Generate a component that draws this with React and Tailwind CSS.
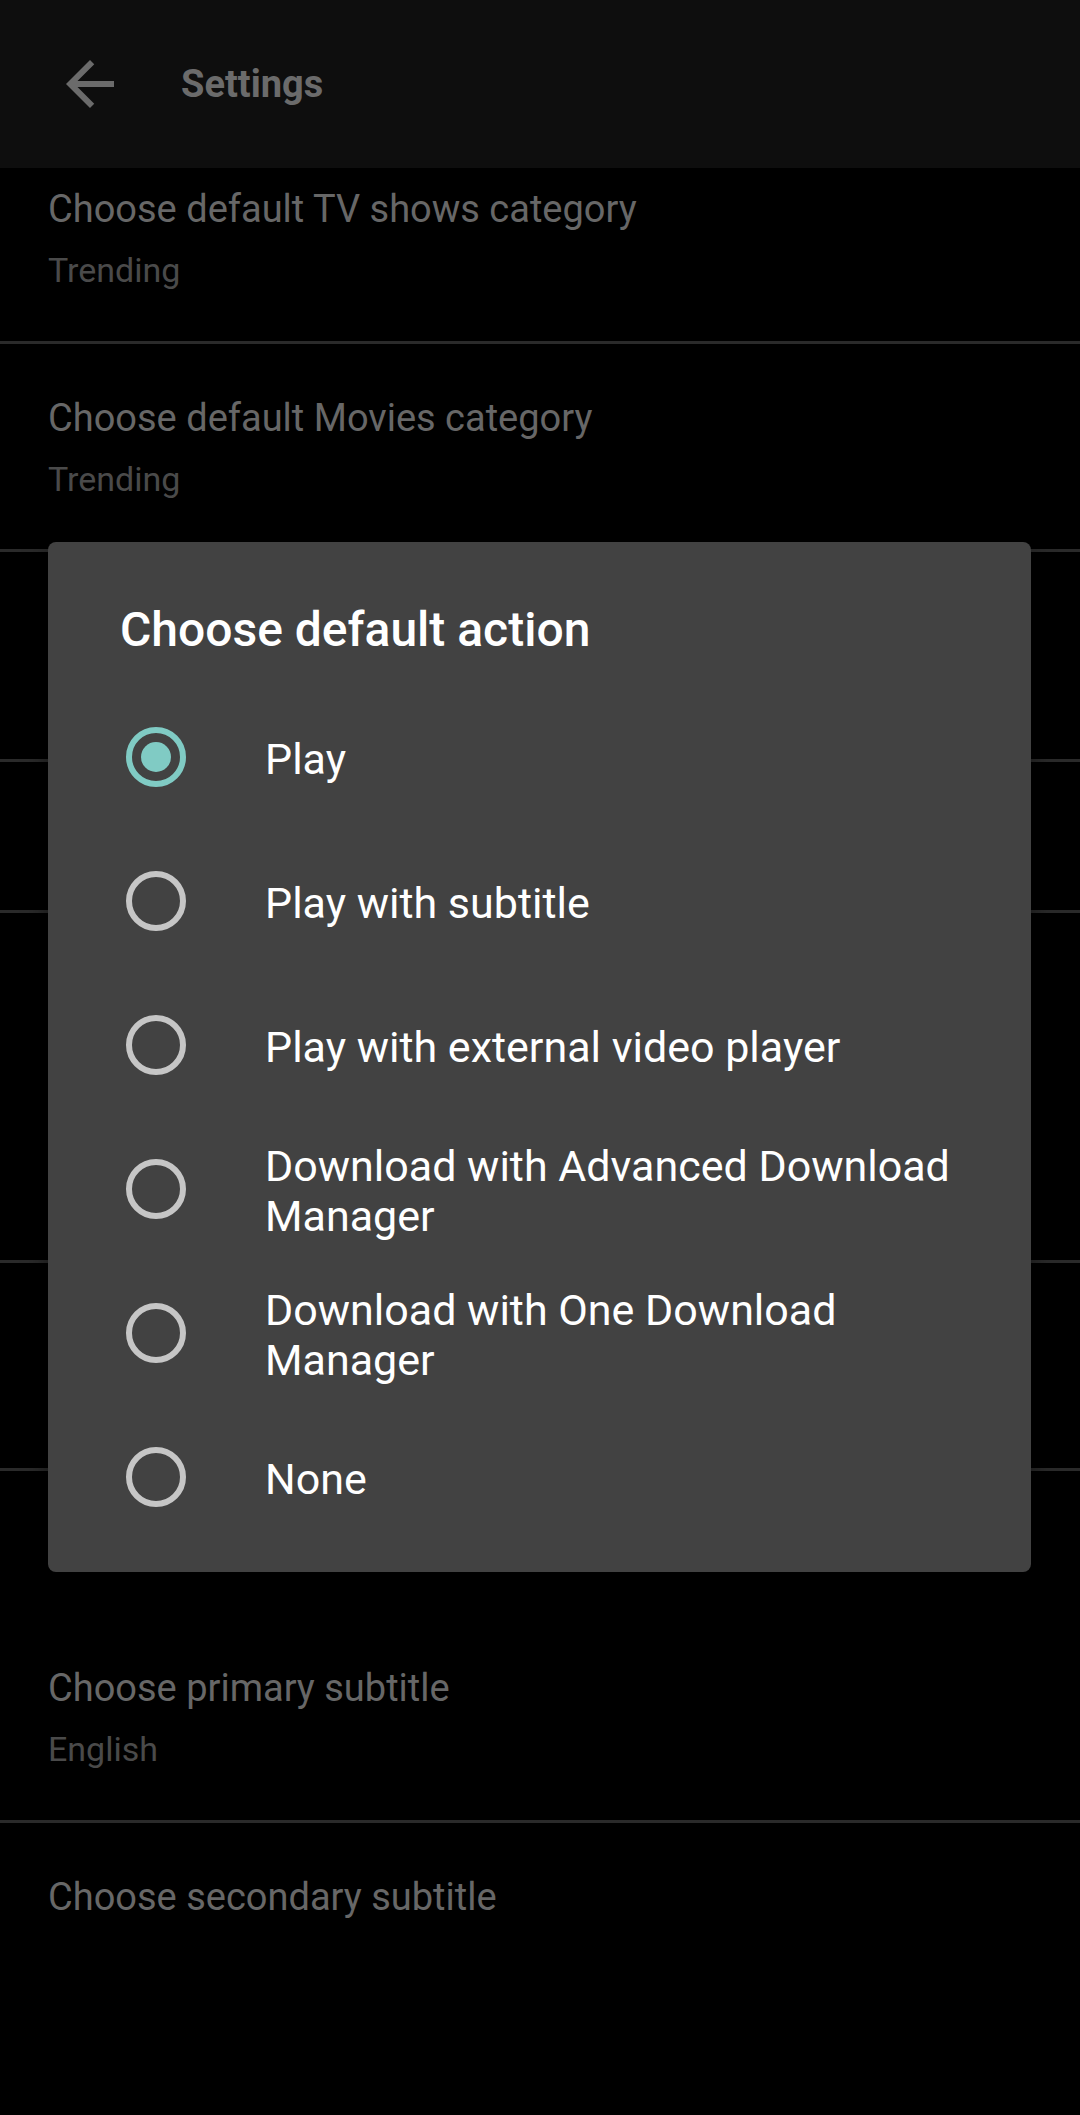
import React from 'react';

const options = [
    'Play',
    'Play with subtitle',
    'Play with external video player',
    'Download with Advanced Download Manager',
    'Download with One Download Manager',
    'None',
];

export default function App() {
    return (
        <div className="relative w-[1080px] h-[2115px] bg-black overflow-hidden font-['Roboto',sans-serif]">
            {/* App bar */}
            <div className="relative z-10 h-[168px] bg-[#0e0e0e] flex items-center">
                <svg viewBox="0 0 24 24" className="ml-[54px] w-[72px] h-[72px]" fill="#6b6b6b">
                    <path d="M20 11H7.83l5.59-5.59L12 4l-8 8 8 8 1.41-1.41L7.83 13H20v-2z" />
                </svg>
                <span className="ml-[55px] text-[38px] font-bold text-[#6b6b6b] leading-[48px]">Settings</span>
            </div>

            {/* Preference list (dimmed behind dialog) */}
            <div className="flex flex-col">
                <Pref height="h-[173px]" top="pt-[17px]" title="Choose default TV shows category" summary="Trending" />
                <Divider />
                <Pref height="h-[205px]" title="Choose default Movies category" summary="Trending" />
                <Divider />
                {/* rows hidden under the dialog */}
                <div className="h-[207px]" />
                <Divider />
                <div className="h-[148px]" />
                <Divider />
                <div className="h-[347px]" />
                <Divider />
                <div className="h-[205px]" />
                <Divider />
                <div className="h-[349px] flex flex-col">
                    <div className="h-[143px]" />
                    <Pref height="h-[206px]" title="Choose primary subtitle" summary="English" />
                </div>
                <Divider />
                <Pref height="h-[205px]" title="Choose secondary subtitle" />
            </div>

            {/* Dialog */}
            <div className="absolute left-[48px] top-[542px] w-[983px] h-[1030px] bg-[#424242] rounded-[8px] pt-[61px] pb-[23px] shadow-[0_8px_24px_rgba(0,0,0,0.5)]">
                <h2 className="pl-[72px] text-[48px] font-medium text-white leading-[54px]">Choose default action</h2>
                <div className="mt-[28px] flex flex-col">
                    {options.map((o, i) => (
                        <div key={o} className="h-[144px] flex items-center pl-[78px] pr-[60px]">
                            <Radio checked={i === 0} />
                            <span className="ml-[79px] pt-[4px] text-[43px] leading-[50px] text-white">{o}</span>
                        </div>
                    ))}
                </div>
            </div>
        </div>
    );
}

function Pref({ height, top = 'pt-[50px]', title, summary }) {
    return (
        <div className={`${height} ${top} px-[48px] shrink-0`}>
            <div className="text-[38px] leading-[48px] text-[#676767] whitespace-nowrap">{title}</div>
            {summary && <div className="mt-[15px] text-[34px] leading-[44px] text-[#4a4a4a]">{summary}</div>}
        </div>
    );
}

function Divider() {
    return <div className="h-[3px] bg-[#2a2a2a] shrink-0" />;
}

function Radio({ checked }) {
    return (
        <div
            className={`w-[60px] h-[60px] shrink-0 rounded-full border-[6px] flex items-center justify-center ${
                checked ? 'border-[#80cbc4]' : 'border-[#c6c6c6]'
            }`}
        >
            {checked && <div className="w-[30px] h-[30px] rounded-full bg-[#80cbc4]" />}
        </div>
    );
}
